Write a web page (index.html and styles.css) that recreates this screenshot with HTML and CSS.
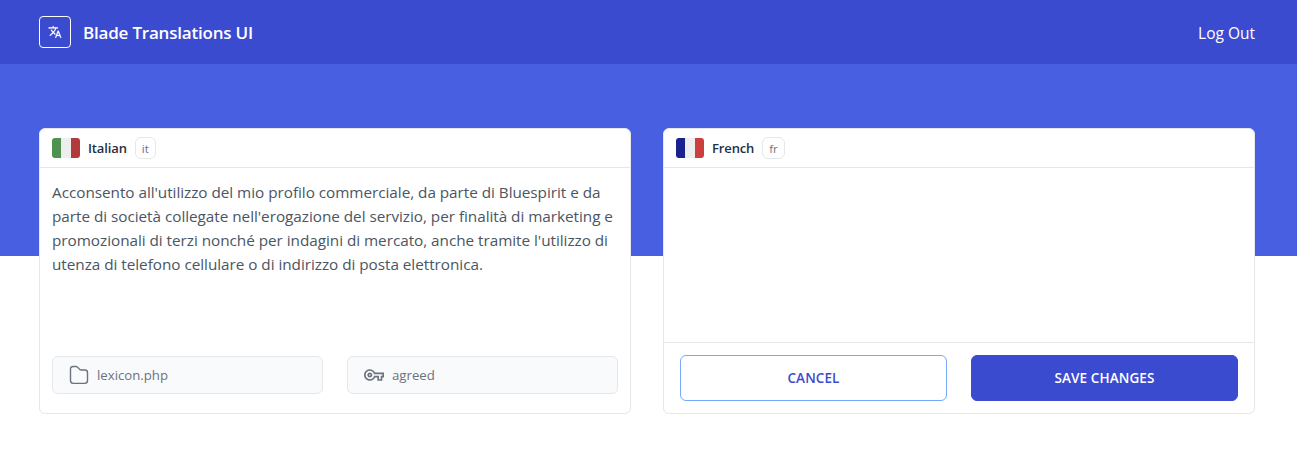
FILE: index.html
```html
<!DOCTYPE html>
<html lang="en">
<head>
<meta charset="utf-8">
<title>Blade Translations UI</title>
<link rel="stylesheet" href="styles.css">
</head>
<body>
<header class="navbar">
  <div class="brand">
    <span class="logo"><svg width="14" height="14" viewBox="0 0 24 24" fill="#fff" stroke="#fff" stroke-width=".3"><path d="M12.87 15.07l-2.54-2.51.03-.03c1.74-1.94 2.98-4.17 3.71-6.53H17V4h-7V2H8v2H1v1.99h11.17C11.5 7.92 10.44 9.75 9 11.35 8.07 10.32 7.3 9.19 6.69 8h-2c.73 1.63 1.73 3.17 2.98 4.56l-5.09 5.02L4 19l5-5 3.11 3.11.76-2.04zM18.5 10h-2L12 22h2l1.12-3h4.75L21 22h2l-4.5-12zm-2.62 7l1.62-4.33L19.12 17h-3.24z"/></svg></span>
    <span class="brand-name">Blade Translations UI</span>
  </div>
  <a class="logout">Log Out</a>
</header>
<div class="band"></div>
<main class="panels">
  <section class="card">
    <div class="card-head">
      <span class="flag flag-it"></span>
      <span class="language">Italian</span>
      <span class="code">it</span>
    </div>
    <p class="source">Acconsento all'utilizzo del mio profilo commerciale, da parte di Bluespirit e da<br>parte di società collegate nell'erogazione del servizio, per finalità di marketing e<br>promozionali di terzi nonché per indagini di mercato, anche tramite l'utilizzo di<br>utenza di telefono cellulare o di indirizzo di posta elettronica.</p>
    <div class="meta">
      <div class="field">
        <svg width="20" height="20" viewBox="0 0 20 20" fill="none" stroke="#6b7280" stroke-width="1.4" stroke-linejoin="round"><path d="M1.5 4V15.6Q1.5 18.4 4.3 18.4H15.7Q18.5 18.4 18.5 15.6V7.6Q18.5 5 15.8 5H12.2Q10.8 5 10.1 3.9L9.3 2.8Q8.4 1.5 6.8 1.5H4.2Q1.5 1.5 1.5 4Z"/></svg>
        <span>lexicon.php</span>
      </div>
      <div class="field">
        <svg width="20" height="20" viewBox="0 0 24 24" fill="#6b7280"><path d="M22 19h-6v-4h-2.68c-1.14 2.42-3.6 4-6.32 4-3.86 0-7-3.14-7-7s3.14-7 7-7c2.72 0 5.17 1.58 6.32 4H24v6h-2v4zm-4-2h2v-4h2v-2H11.94l-.23-.67C11.01 8.34 9.11 7 7 7c-2.76 0-5 2.24-5 5s2.24 5 5 5c2.11 0 4.01-1.34 4.71-3.33l.23-.67H18v4zM7 15c-1.65 0-3-1.35-3-3s1.35-3 3-3 3 1.35 3 3-1.35 3-3 3zm0-4c-.55 0-1 .45-1 1s.45 1 1 1 1-.45 1-1-.45-1-1-1z"/></svg>
        <span>agreed</span>
      </div>
    </div>
  </section>
  <section class="card">
    <div class="card-head">
      <span class="flag flag-fr"></span>
      <span class="language">French</span>
      <span class="code">fr</span>
    </div>
    <div class="editor"></div>
    <div class="actions">
      <button class="btn cancel">CANCEL</button>
      <button class="btn save">SAVE CHANGES</button>
    </div>
  </section>
</main>
</body>
</html>
```
FILE: styles.css
```css
* { box-sizing: border-box; }
body { margin: 0; height: 455px; overflow: hidden; background: #fff; color: #4b5563; font-family: "Open Sans", "Noto Sans", sans-serif; font-size: 15.3px; }
svg { display: block; flex: none; }
.navbar { height: 64px; padding: 0 42px 0 39px; background: #3b4bcf; display: flex; align-items: center; justify-content: space-between; color: #fff; }
.brand { display: flex; align-items: center; gap: 12px; }
.logo { width: 32px; height: 32px; border: 1px solid #fff; border-radius: 4px; display: flex; align-items: center; justify-content: center; }
.brand-name { padding-top: 2px; font-size: 17px; font-weight: 600; line-height: 24px; white-space: nowrap; letter-spacing: -.2px; }
.logout { padding-top: 2px; font-size: 15.5px; line-height: 24px; }
.band { height: 192px; background: #485fe2; }
.panels { display: grid; grid-template-columns: 592px 592px; gap: 32px; margin: -128px 0 0 39px; }
.card { height: 286px; background: #fff; border: 1px solid #e5e7eb; border-radius: 6px; display: flex; flex-direction: column; }
.card-head { height: 39px; flex: none; padding-left: 12px; border-bottom: 1px solid #e5e7eb; display: flex; align-items: center; gap: 8px; }
.flag { width: 28px; height: 20px; border-radius: 3px; }
.flag-it { background: linear-gradient(90deg, #50914f 0 9px, #eee 9px 19px, #b33a3a 19px); }
.flag-fr { background: linear-gradient(90deg, #1b218f 0 9px, #eee 9px 19px, #cd3e3e 19px); }
.language { color: #252f3f; font-size: 13px; font-weight: 600; letter-spacing: -.13px; }
.code { height: 22px; padding: 0 6px; border: 1px solid #e5e7eb; border-radius: 6px; font-size: 11.5px; line-height: 21px; color: #6b7280; }
.source { margin: 0; padding: 12px 12px 0; height: 188px; line-height: 24px; white-space: nowrap; letter-spacing: -.035px; }
.meta { display: grid; grid-template-columns: 271px 271px; gap: 24px; padding-left: 12px; }
.field { height: 38px; border: 1px solid #e5e7eb; border-radius: 6px; background: #f9fafb; color: #6b7280; display: flex; align-items: center; gap: 8px; padding-left: 16px; font-size: 13.2px; }
.editor { flex: 1; }
.actions { height: 71px; border-top: 1px solid #e5e7eb; padding: 12px 16px; display: grid; grid-template-columns: 267px 267px; gap: 24px; }
.btn { height: 46px; border-radius: 6px; font: 600 13.5px/20px "Open Sans", "Noto Sans", sans-serif; letter-spacing: .1px; }
.cancel { border: 1px solid #76a9fa; color: #3b4bcf; background: #fff; }
.save { border: 1px solid #3b4bcf; color: #fff; background: #3b4bcf; }
```
